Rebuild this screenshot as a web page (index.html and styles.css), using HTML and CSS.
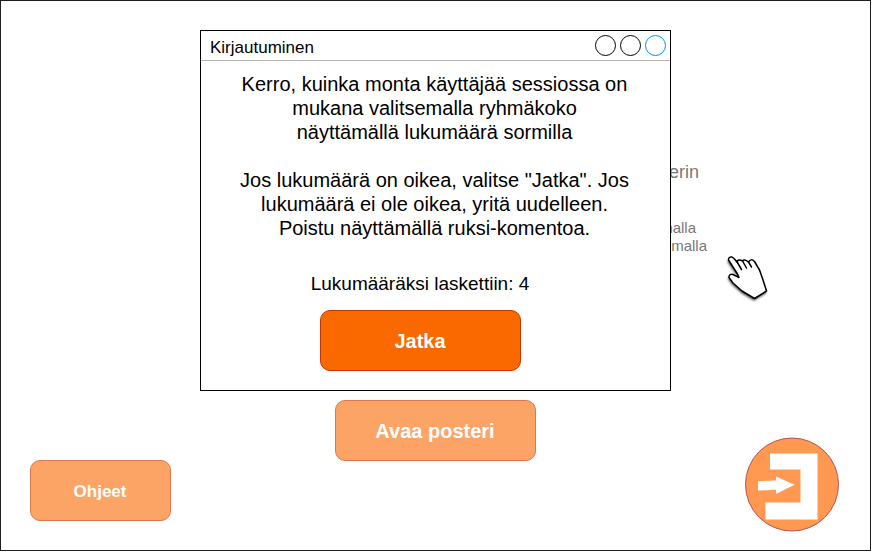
FILE: index.html
```html
<!DOCTYPE html>
<html lang="fi">
<head>
<meta charset="utf-8">
<title>Kirjautuminen</title>
<link rel="stylesheet" href="styles.css">
</head>
<body>
<main class="stage">
  <div class="hints">
    <p class="hint-title">erin</p>
    <p class="hint hint-first">malla</p>
    <p class="hint hint-second">malla</p>
  </div>
  <button class="button faded open">Avaa posteri</button>
  <footer class="footer">
    <button class="button faded help">Ohjeet</button>
    <svg class="exit" viewBox="-0.5 0 95 95" width="95" height="95">
      <circle cx="47.5" cy="47.5" r="46.5" fill="#ff9850" stroke="#b65456" stroke-width="1"/>
      <path d="M25.5 16.5H73V82.5H21V65.5H56V32.5H25.5Z" fill="#fff"/>
      <path d="M13.5 44.2L31.5 43.6V39.5L50 47.8L31.5 57V52.7L13.5 53.6Z" fill="#fff"/>
    </svg>
  </footer>

  <section class="dialog">
    <header class="titlebar">
      <h1>Kirjautuminen</h1>
      <div class="controls"><i></i><i></i><i class="active"></i></div>
    </header>
    <div class="content">
      <p class="message">Kerro, kuinka monta käyttäjää sessiossa on<br>mukana valitsemalla ryhmäkoko<br>näyttämällä lukumäärä sormilla<br><br>Jos lukumäärä on oikea, valitse "Jatka". Jos<br>lukumäärä ei ole oikea, yritä uudelleen.<br>Poistu näyttämällä ruksi-komentoa.</p>
      <p class="count">Lukumääräksi laskettiin: 4</p>
      <button class="button continue">Jatka</button>
    </div>
  </section>

  <svg class="pointer" viewBox="0 0 60 60" width="60" height="60">
    <path class="shadow" d="M8.5 15Q8.5 11.5 12 12L14 13.5L17 17Q18 13.5 22.5 16Q24 13.5 28.5 17Q31 13 34.5 16.5L39.5 25L43 35L46.5 46L34.5 53.5L22 46L13 38L9 32.5Q9 28.5 13 29.5L19 32.5L17.5 29Z"/>
    <path class="hand" d="M8.5 15Q8.5 11.5 12 12L14 13.5L17 17Q18 13.5 22.5 16Q24 13.5 28.5 17Q31 13 34.5 16.5L39.5 25L43 35L46.5 46L34.5 53.5L22 46L13 38L9 32.5Q9 28.5 13 29.5L19 32.5L17.5 29Z"/>
    <path class="finger" d="M16.5 16L21.5 24.5M22.5 16L26.5 23M28.5 17L31.5 22"/>
  </svg>
</main>
</body>
</html>
```
FILE: styles.css
```css
* { box-sizing: border-box; }

body {
  margin: 0;
  background: #fff;
  font-family: "Liberation Sans", Arial, sans-serif;
}

h1, p { margin: 0; font-weight: normal; }

.stage {
  position: relative;
  display: flex;
  flex-direction: column;
  width: 871px;
  height: 551px;
  border: 1px solid #1e1e1e;
  overflow: hidden;
}

.hints {
  flex: none;
  height: 399px;
  padding-top: 160px;
  color: #777;
}

.hint-title {
  width: 698px;
  font-size: 18px;
  line-height: 22px;
  text-align: right;
}

.hint { font-size: 15px; line-height: 18px; text-align: right; }
.hint-first { width: 695px; margin-top: 36px; }
.hint-second { width: 706px; }

.button {
  display: block;
  flex: none;
  width: 201px;
  height: 61px;
  padding: 2px 1px 0 0;
  border: 1px solid #c73500;
  border-radius: 10px;
  background: #fa6800;
  color: #fff;
  font: bold 20px "Liberation Sans", Arial, sans-serif;
}

.faded { background: #fca466; border-color: #dd7550; }
.open { margin-left: 334px; }

.footer {
  display: flex;
  align-items: flex-end;
  justify-content: space-between;
  margin-top: -1px;
  padding: 0 31px 0 29px;
}

.help { width: 141px; margin-bottom: 11px; font-size: 17px; }
.exit { display: block; margin-top: -30px; }

.dialog {
  position: absolute;
  left: 199px;
  top: 29px;
  width: 471px;
  height: 361px;
  border: 1px solid #000;
  background: #fff;
  color: #000;
}

.titlebar {
  display: flex;
  align-items: center;
  justify-content: space-between;
  height: 30px;
  padding: 0 4px 0 9px;
  border-bottom: 1px solid #b3b3b3;
}

.titlebar h1 { font-size: 17px; line-height: 20px; padding-top: 4px; }
.controls { display: flex; gap: 4px; }
.controls i { width: 21px; height: 21px; border: 1px solid #000; border-radius: 50%; }
.controls .active { border-color: #008cff; }

.content { padding-top: 11px; }
.message { width: 467px; font-size: 20px; line-height: 24px; text-align: center; white-space: nowrap; }
.count { width: 438px; margin-top: 33px; font-size: 19px; line-height: 22px; text-align: center; }
.continue { margin: 15px 0 0 119px; }

.pointer { position: absolute; left: 719px; top: 244px; }
.pointer path { stroke-linejoin: round; stroke-linecap: round; }
.shadow { fill: #555; transform: translate(-0.5px, 2px); filter: blur(1px); stroke: #777; stroke-width: 1; }
.hand { fill: #fff; stroke: #000; stroke-width: 1.5; }
.finger { fill: none; stroke: #000; stroke-width: 1.5; }
```
